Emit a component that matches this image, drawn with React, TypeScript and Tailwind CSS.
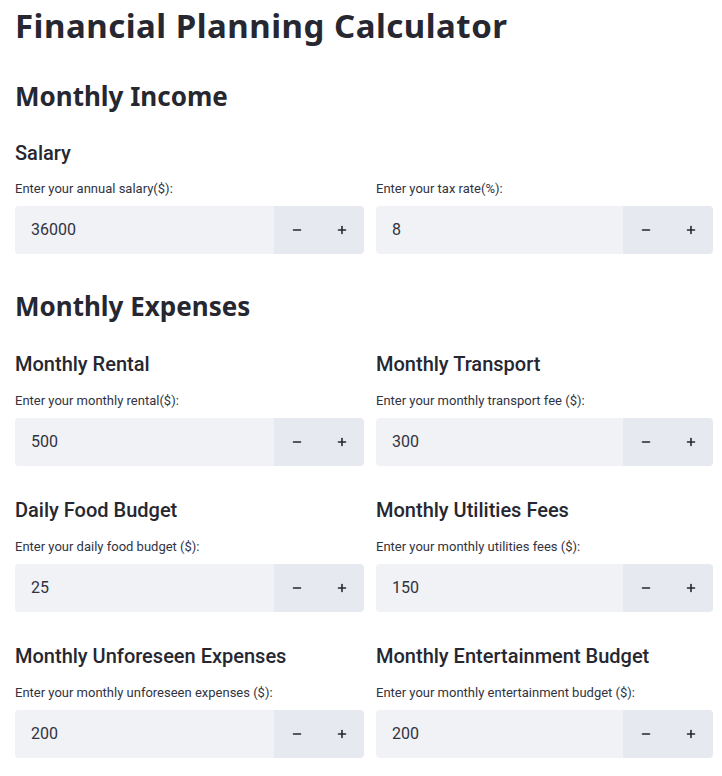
import { Minus, Plus } from "lucide-react";

type Field = {
  heading?: string;
  label: string;
  value: string;
};

const incomeFields: Field[] = [
  { label: "Enter your annual salary($):", value: "36000" },
  { label: "Enter your tax rate(%):", value: "8" },
];

const expenseFields: Field[] = [
  { heading: "Monthly Rental", label: "Enter your monthly rental($):", value: "500" },
  { heading: "Monthly Transport", label: "Enter your monthly transport fee ($):", value: "300" },
  { heading: "Daily Food Budget", label: "Enter your daily food budget ($):", value: "25" },
  { heading: "Monthly Utilities Fees", label: "Enter your monthly utilities fees ($):", value: "150" },
  { heading: "Monthly Unforeseen Expenses", label: "Enter your monthly unforeseen expenses ($):", value: "200" },
  { heading: "Monthly Entertainment Budget", label: "Enter your monthly entertainment budget ($):", value: "200" },
];

const NumberInput = ({ value }: { value: string }) => (
  <div className="mt-[7px] flex h-12 overflow-hidden rounded">
    <div className="flex flex-1 items-center bg-[#f0f2f6] pl-4 text-[16px] text-[#31333f]">
      {value}
    </div>
    <button className="flex w-[45px] items-center justify-center bg-[#e6e9ef] text-[#262730]">
      <Minus size={12} strokeWidth={3.2} />
    </button>
    <button className="flex w-[45px] items-center justify-center bg-[#e6e9ef] text-[#262730]">
      <Plus size={12} strokeWidth={3.2} />
    </button>
  </div>
);

const FieldBlock = ({ field }: { field: Field }) => (
  <div>
    {field.heading && (
      <h3 className="mb-[13px] text-[20px] font-medium leading-[28px] text-[#262730]">
        {field.heading}
      </h3>
    )}
    <label className="block text-[13px] leading-[20px] text-[#31333f]">
      {field.label}
    </label>
    <NumberInput value={field.value} />
  </div>
);

export default function App() {
  return (
    <div
      className="h-[776px] w-[722px] overflow-hidden bg-white px-[15px] pt-[6px] text-[#262730]"
      style={{ fontFamily: "Roboto, 'Noto Sans', sans-serif" }}
    >
      <h1 className="font-['Noto_Sans',sans-serif] text-[33px] font-bold leading-[40px] tracking-[0.5px]">
        Financial Planning Calculator
      </h1>

      <h2 className="mt-[32px] font-['Noto_Sans',sans-serif] text-[26px] font-bold leading-[36px]">
        Monthly Income
      </h2>
      <h3 className="mt-[25px] mb-[12px] text-[20px] font-medium leading-[28px]">
        Salary
      </h3>
      <div className="grid grid-cols-[349px_337px] gap-x-3">
        {incomeFields.map((field, i) => (
          <FieldBlock key={i} field={field} />
        ))}
      </div>

      <h2 className="mt-[34px] font-['Noto_Sans',sans-serif] text-[26px] font-bold leading-[36px]">
        Monthly Expenses
      </h2>
      <div className="mt-[26px] grid grid-cols-[349px_337px] gap-x-3 gap-y-[30px]">
        {expenseFields.map((field, i) => (
          <FieldBlock key={i} field={field} />
        ))}
      </div>
    </div>
  );
}
